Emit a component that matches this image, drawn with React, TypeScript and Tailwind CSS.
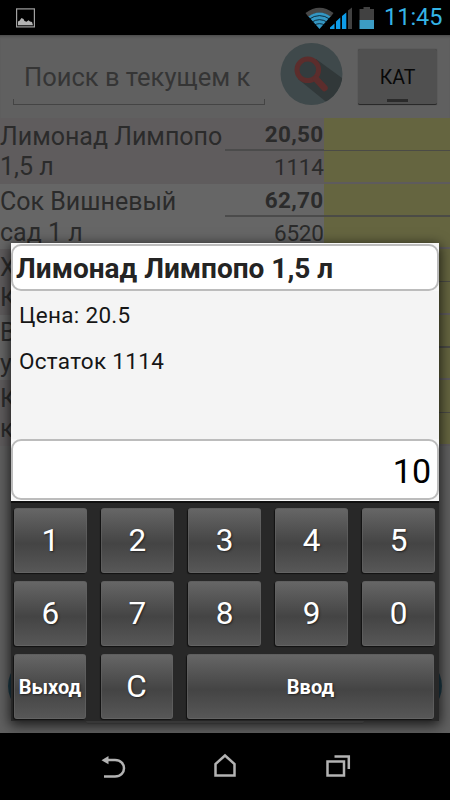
import clsx from 'clsx'

const products = [
  { id: 1, lines: ['Лимонад Лимпопо', '1,5 л'], price: '20,50', stock: '1114' },
  { id: 2, lines: ['Сок Вишневый', 'сад 1 л'], price: '62,70', stock: '6520' },
  { id: 3, lines: ['Х', 'К'], price: '', stock: '' },
  { id: 4, lines: ['В', 'у'], price: '', stock: '' },
  { id: 5, lines: ['К', 'к'], price: '', stock: '' },
]

const digits = ['1', '2', '3', '4', '5', '6', '7', '8', '9', '0']

const StatusBar = () => (
  <header className="flex h-[35px] shrink-0 items-center bg-black pl-4 pr-[9px]">
    <svg className="h-5 w-[19px]" viewBox="0 0 19 20">
      <rect x="0.6" y="0.9" width="17.8" height="18" fill="none" stroke="#a0a0a0" strokeWidth="1.2" />
      <path d="M2 17.300V13.500l1.500-.8 2-2.700 2 1 1 2 2 .7 2-1.500 1.500 1.300 2 .5 1 3.300z" fill="#b4b4b4" />
    </svg>
    <div className="flex-1" />
    <svg className="h-6 w-[70px]" viewBox="305 5 70 24">
      <path d="M305.500 12Q319.500 1.500 333.500 12L330.500 16Q319.500 7.500 308.500 16z" fill="#474747" />
      <path d="M308.500 15.500Q319.500 7.500 330.500 15.500L319.500 28z" fill="#3497c4" />
      <path d="M309 18.200Q319.500 11 330 18.200M311.500 21.300Q319.500 16 327.500 21.300M314 24.300Q319.500 21 325 24.300" stroke="#04121a" strokeWidth="0.8" fill="none" />
      <path d="M330 28v-1.500l4.500-4v5.500zM336 28v-7.500l4.300-4v11.500zM342 28V15l4.300-3.500V28z" fill="#0e9ce8" />
      <path d="M348 28V9.500l4-3V28z" fill="#414141" />
      <path d="M359.500 8h4V6h6.500v2h4v11h-14.500z" fill="#414141" />
      <rect x="359.500" y="19" width="14.500" height="9" fill="#3c9cc4" />
    </svg>
    <span className="ml-[9px] w-[57px] whitespace-nowrap text-[23.500px] leading-none text-[#35b4e6]">11:45</span>
  </header>
)

const SearchBar = () => (
  <div className="flex h-[83px] shrink-0 bg-[#606060] shadow-[inset_0_3px_3px_-2px_#444]">
    <div className="ml-[13px] mt-3 h-[58px] w-[252px] overflow-hidden">
      <div className="h-[52px] overflow-hidden whitespace-nowrap pl-[11px] text-[25.500px] leading-[60px] text-[#353535]">
        Поиск в текущем к
      </div>
      <div className="h-[6px] border border-t-0 border-[#444]" />
    </div>
    <svg className="ml-[15px] mt-[8px] size-[63px]" viewBox="0 0 63 63">
      <defs>
        <clipPath id="disc">
          <circle cx="31.500" cy="31" r="31" />
        </clipPath>
      </defs>
      <circle cx="31.500" cy="31" r="31" fill="#3f494b" />
      <path d="M18 36L50 62 70 50 62 35 36 16z" fill="#313839" clipPath="url(#disc)" />
      <circle cx="27.800" cy="26.800" r="10.800" fill="#333c3e" stroke="#5c2d2c" strokeWidth="5" />
      <path d="M36 36l8.500 9" stroke="#5c2d2c" strokeWidth="6.500" strokeLinecap="round" />
    </svg>
    <button className="ml-[15px] mt-[14px] flex h-[56px] w-[79px] flex-col items-center rounded-[2px] border-b border-b-[#292929] bg-[#505050] shadow-[0_0_1px_#333]">
      <span className="pt-[18px] text-[19.500px] leading-[22px] text-[#080808]">КАТ</span>
      <span className="mt-[10px] h-[3px] w-[21px] bg-[#2b2b2b]" />
    </button>
  </div>
)

const ProductRow = ({ product, odd }: { product: (typeof products)[number]; odd: boolean }) => (
  <div className={clsx('flex h-[65.6px] text-[#2b2b2b]', odd ? 'bg-[#5f5c5d]' : 'bg-[#666666]')}>
    <div className="w-[225px] whitespace-nowrap pt-[3.500px] text-[25px] leading-[30.500px]">
      {product.lines.map((line) => (
        <div key={line}>{line}</div>
      ))}
    </div>
    <div className="w-[98.500px] text-right text-[22.500px] leading-[32px]">
      <div className="h-[33px] border-b-2 border-[#4b4b4b] font-bold tracking-[0.3px]">{product.price}</div>
      <div className="tracking-[-0.3px]">{product.stock}</div>
    </div>
    <div className="flex flex-1 flex-col">
      <div className="h-[31.500px] bg-[#656540]" />
      <div className="h-[1.500px] bg-[#4b4b46]" />
      <div className="h-[30.500px] bg-[#656540]" />
      <div className="h-[2px] bg-[#5e5b5c]" />
    </div>
  </div>
)

const keyClass =
  'flex h-[65px] items-center justify-center rounded-[3px] border border-[#636363]/70 bg-linear-to-b from-[#666] via-[#444] via-55% to-[#575757] text-white shadow-[-1px_1px_1px_0px_#111] [text-shadow:1px_1px_2px_#222]'

const QuantityDialog = () => (
  <div className="absolute left-[11px] top-[243px] flex h-[478px] w-[428px] flex-col bg-[#f4f4f4] shadow-[0_3px_12px_1px_rgba(0,0,0,0.75)]">
    <div className="bg-[#f8f8f8]">
      <h1 className="mt-px h-[47px] whitespace-nowrap rounded-[10px] border-2 border-[#bcbcbc] bg-white pl-[3px] text-[28px] font-bold leading-[45px] text-[#242424]">
        Лимонад Лимпопо 1,5 л
      </h1>
    </div>
    <div className="flex-1 pl-2 text-[22.500px] leading-[46px] text-[#161616]">
      <p className="mt-px tracking-[0.3px]">Цена: 20.5</p>
      <p className="tracking-[0.3px]">Остаток 1114</p>
    </div>
    <div className="bg-[#f8f8f8] pb-px">
      <div className="h-[61px] rounded-[10px] border-2 border-[#bcbcbc] bg-white pr-1.5 text-right text-[34px] leading-[60px] text-black">
        10
      </div>
    </div>
    <div className="flex h-[220px] flex-col gap-2 border-t-2 border-[#101010] bg-[#282828] pt-[5px]">
      <div className="grid grid-cols-5 gap-x-[14.500px] gap-y-2 pl-[3px] pr-1">
        {digits.map((digit) => (
          <button key={digit} className={clsx(keyClass, 'text-[31.500px]')}>
            {digit}
          </button>
        ))}
      </div>
      <div className="flex gap-[14.500px] pl-[3px] pr-[5px]">
        <button className={clsx(keyClass, 'w-[72px] text-[20px] font-bold')}>Выход</button>
        <button className={clsx(keyClass, 'w-[72px] text-[31.500px]')}>С</button>
        <button className={clsx(keyClass, 'flex-1 text-[20px] font-bold')}>Ввод</button>
      </div>
    </div>
  </div>
)

const NavigationBar = () => (
  <nav className="flex h-[67px] shrink-0 items-center justify-center bg-black">
    <svg className="h-[67px] w-[260px]" viewBox="95 733 260 67" fill="none" stroke="#b3b3b3">
      <path d="M107 760h8c12 0 12 16.500 0 16.500h-11" strokeWidth="2.500" />
      <path d="M101.500 760.300l7-4.300v8.300z" fill="#b3b3b3" stroke="none" />
      <path d="M215.500 775.500v-11.500l9.500-8.500 9.500 8.500v11.500z" strokeWidth="2.500" />
      <rect x="327.500" y="761.500" width="16.500" height="14" strokeWidth="2.500" />
      <path d="M334.500 756.500h14.300v12.500" strokeWidth="2.500" />
    </svg>
  </nav>
)

const App = () => (
  <div className="relative flex h-[800px] w-[450px] flex-col overflow-hidden bg-[#606060] font-[Roboto,sans-serif]">
    <StatusBar />
    <SearchBar />
    <main className="flex-1">
      {products.map((product, index) => (
        <ProductRow key={product.id} product={product} odd={index % 2 === 0} />
      ))}
    </main>
    {/* Bottom controls partly covered by the dialog */}
    <div className="absolute left-[8px] top-[655px] size-[62px] rounded-full bg-[#1d3b48]" />
    <div className="absolute left-[380px] top-[655px] size-[62px] rounded-full bg-[#1d3b48]" />
    <QuantityDialog />
    <div className="absolute left-[86px] top-[721px] h-[3px] w-[278px] rounded-b-md border-b border-[#303030] bg-[#373737]" />
    <NavigationBar />
  </div>
)

export default App
